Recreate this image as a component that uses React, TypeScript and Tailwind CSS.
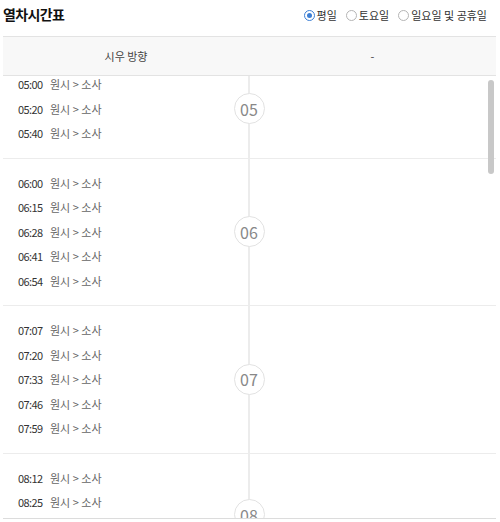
import React, { useEffect, useRef } from 'react';

interface HourBlock {
  hour: string;
  times: string[];
}

const schedule: HourBlock[] = [
  { hour: '05', times: ['05:00', '05:20', '05:40'] },
  { hour: '06', times: ['06:00', '06:15', '06:28', '06:41', '06:54'] },
  { hour: '07', times: ['07:07', '07:20', '07:33', '07:46', '07:59'] },
  { hour: '08', times: ['08:12', '08:25', '08:38', '08:51'] },
];

const font = { fontFamily: '"Noto Sans CJK KR", "Liberation Sans", sans-serif' };

const Radio: React.FC<{ label: string; checked?: boolean }> = ({ label, checked }) => (
  <label className="flex items-center gap-[2px] text-[11px] text-[#333]">
    <span
      className={`w-[11px] h-[11px] rounded-full border flex items-center justify-center bg-white ${
        checked ? 'border-[#3d7fd4]' : 'border-[#b5b5b5]'
      }`}
    >
      {checked && <span className="w-[5px] h-[5px] rounded-full bg-[#3d7fd4]" />}
    </span>
    {label}
  </label>
);

const App: React.FC = () => {
  const listRef = useRef<HTMLDivElement>(null);

  useEffect(() => {
    if (listRef.current) listRef.current.scrollTop = 16;
  }, []);

  return (
    <div className="w-[500px] h-[522px] bg-white overflow-hidden" style={font}>
      <div className="pl-[3px] pr-[13px] h-[28px] flex items-center justify-between mb-2">
        <h1 className="text-[14px] font-bold text-[#111] tracking-[-0.6px]">열차시간표</h1>
        <div className="flex items-center gap-[9px] pt-[2px]">
          <Radio label="평일" checked />
          <Radio label="토요일" />
          <Radio label="일요일 및 공휴일" />
        </div>
      </div>

      <div className="ml-[3px] w-[493px]">
        <div className="flex h-[40px] items-center bg-[#f8f8f8] border-y border-[#e3e3e3] text-[11px] text-[#444]">
          <div className="w-[246px] text-center">시우 방향</div>
          <div className="flex-1 text-center">-</div>
        </div>

        <div className="relative border-b border-[#dcdcdc]">
          <div
            ref={listRef}
            className="h-[442px] overflow-y-auto [scrollbar-width:none] [&::-webkit-scrollbar]:hidden"
          >
            {schedule.map((block) => (
              <div key={block.hour} className="flex border-b border-[#ececec]">
                <div className="w-[245px] py-3 pl-[15px]">
                  {block.times.map((t) => (
                    <div key={t} className="h-[24.5px] flex items-center text-[11px]">
                      <span className="w-[32px] text-[#333] tracking-[-0.6px]">{t}</span>
                      <span className="text-[#666]">원시 &gt; 소사</span>
                    </div>
                  ))}
                </div>
                <div className="w-[2px] bg-[#ececec] flex items-center justify-center">
                  <div className="shrink-0 w-[31px] h-[31px] rounded-full border border-[#e2e2e2] bg-white flex items-center justify-center text-[16px] text-[#888]">
                    {block.hour}
                  </div>
                </div>
                <div className="flex-1" />
              </div>
            ))}
          </div>
          <div className="absolute right-[2px] top-[4px] w-[6px] h-[94px] rounded-full bg-[#c8c8c8]" />
        </div>
      </div>
    </div>
  );
};

export default App;
